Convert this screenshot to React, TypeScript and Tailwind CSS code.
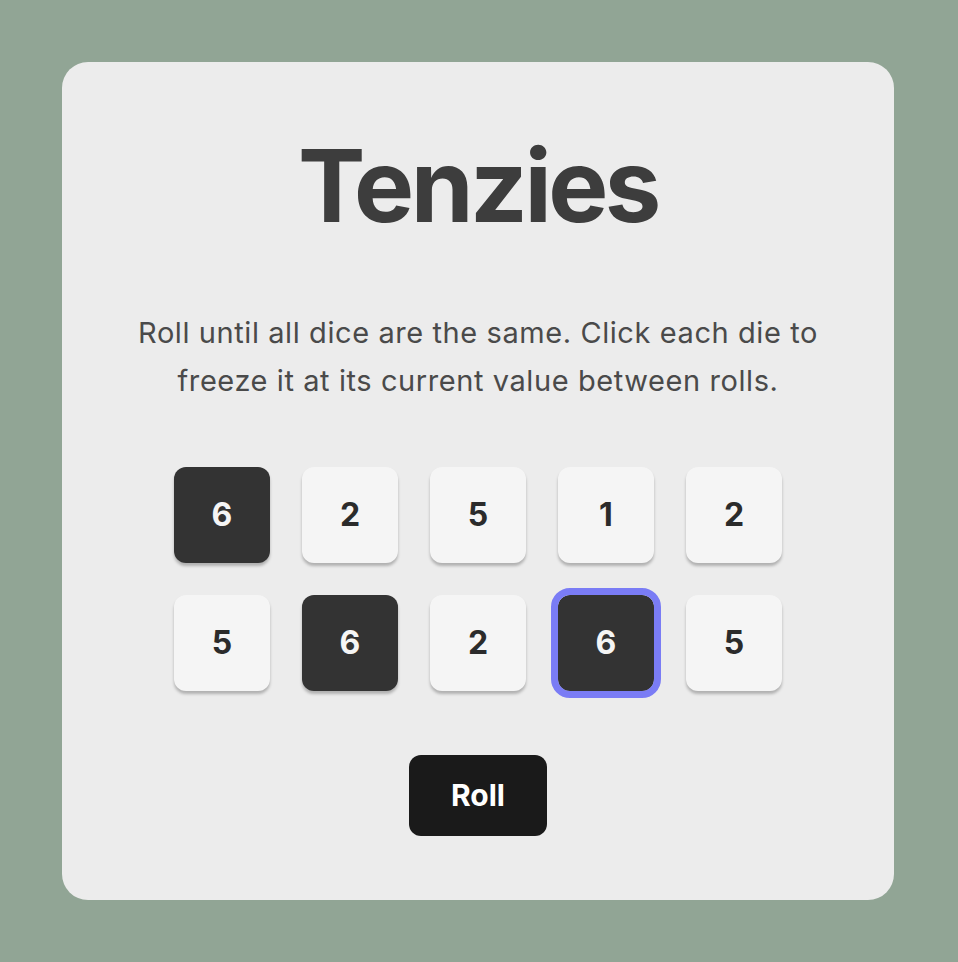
import { useState } from "react";

type Die = { value: number; held: boolean; focused?: boolean };

const initialDice: Die[] = [
  { value: 6, held: true },
  { value: 2, held: false },
  { value: 5, held: false },
  { value: 1, held: false },
  { value: 2, held: false },
  { value: 5, held: false },
  { value: 6, held: true },
  { value: 2, held: false },
  { value: 6, held: true, focused: true },
  { value: 5, held: false },
];

export default function App() {
  const [dice, setDice] = useState<Die[]>(initialDice);

  const toggle = (i: number) =>
    setDice((prev) => prev.map((d, idx) => (idx === i ? { ...d, held: !d.held } : d)));

  const roll = () =>
    setDice((prev) =>
      prev.map((d) => (d.held ? d : { ...d, value: Math.ceil(Math.random() * 6) }))
    );

  return (
    <div
      className="min-h-screen bg-[#91a595] p-[62px]"
      style={{ fontFamily: "Inter, 'Liberation Sans', sans-serif" }}
    >
      <main className="flex h-[838px] w-[832px] flex-col items-center rounded-[26px] bg-[#ececec] pt-[73px]">
        <h1 className="text-[101px] font-bold leading-none tracking-[-0.035em] text-[#3d3d3d]">
          Tenzies
        </h1>
        <p className="mt-[73px] w-[720px] text-center text-[29px] leading-[48px] tracking-[0.02em] text-[#4a4a4a]">
          Roll until all dice are the same. Click each die to freeze it at its current value
          between rolls.
        </p>
        <div className="mt-[62px] grid grid-cols-5 gap-[32px]">
          {dice.map((d, i) => (
            <button
              key={i}
              onClick={() => toggle(i)}
              className={`flex h-[96px] w-[96px] items-center justify-center rounded-[12px] text-[32px] font-bold shadow-[0_3px_3px_rgba(0,0,0,0.25)] ${
                d.held ? "bg-[#333333] text-[#f5f5f5]" : "bg-[#f5f5f5] text-[#2b2b2b]"
              } ${d.focused ? "outline-[7px] outline-solid outline-[#7a7cf5]" : ""}`}
            >
              {d.value}
            </button>
          ))}
        </div>
        <button
          onClick={roll}
          className="mt-[64px] flex h-[81px] w-[138px] items-center justify-center rounded-[12px] bg-[#1a1a1a] text-[30px] font-bold text-white"
        >
          Roll
        </button>
      </main>
    </div>
  );
}
